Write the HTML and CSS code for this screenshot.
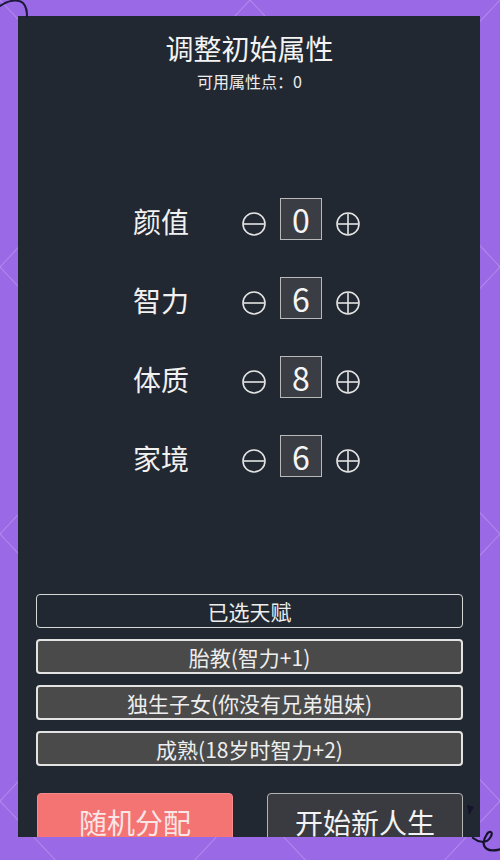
FILE: index.html
```html
<!DOCTYPE html>
<html lang="zh-CN">
<head>
<meta charset="utf-8">
<title>调整初始属性</title>
<link rel="stylesheet" href="styles.css">
</head>
<body>
<svg class="doodle doodle-tl" width="40" height="24" viewBox="0 0 40 24">
  <path d="M0 6 C8 0 18 -1 23 3 C27 7 27 12 27 17" fill="none" stroke="#1d1a3c" stroke-width="2" stroke-linecap="round"/>
</svg>
<svg class="doodle doodle-br" width="40" height="64" viewBox="0 0 40 64">
  <path d="M1 15 L8 17 L3 25 Z" fill="#15142a"/>
  <path d="M7 48 C12 52 20 54 24 48 C28 42 24 40 21 44 C17 50 16 56 21 59 C25 62 32 60 39 58" fill="none" stroke="#15142a" stroke-width="2.2" stroke-linecap="round"/>
</svg>
<main class="panel">
  <h1 class="title">调整初始属性</h1>
  <p class="points">可用属性点：0</p>

  <section class="attrs">
    <div class="attr-row">
      <span class="attr-label">颜值</span>
      <svg class="ctl" viewBox="0 0 24 24"><circle cx="12" cy="12" r="11" /><line x1="1.5" y1="12" x2="22.5" y2="12"/></svg>
      <span class="attr-value">0</span>
      <svg class="ctl" viewBox="0 0 24 24"><circle cx="12" cy="12" r="11" /><line x1="1.5" y1="12" x2="22.5" y2="12"/><line x1="12" y1="1.5" x2="12" y2="22.5"/></svg>
    </div>
    <div class="attr-row">
      <span class="attr-label">智力</span>
      <svg class="ctl" viewBox="0 0 24 24"><circle cx="12" cy="12" r="11" /><line x1="1.5" y1="12" x2="22.5" y2="12"/></svg>
      <span class="attr-value">6</span>
      <svg class="ctl" viewBox="0 0 24 24"><circle cx="12" cy="12" r="11" /><line x1="1.5" y1="12" x2="22.5" y2="12"/><line x1="12" y1="1.5" x2="12" y2="22.5"/></svg>
    </div>
    <div class="attr-row">
      <span class="attr-label">体质</span>
      <svg class="ctl" viewBox="0 0 24 24"><circle cx="12" cy="12" r="11" /><line x1="1.5" y1="12" x2="22.5" y2="12"/></svg>
      <span class="attr-value">8</span>
      <svg class="ctl" viewBox="0 0 24 24"><circle cx="12" cy="12" r="11" /><line x1="1.5" y1="12" x2="22.5" y2="12"/><line x1="12" y1="1.5" x2="12" y2="22.5"/></svg>
    </div>
    <div class="attr-row">
      <span class="attr-label">家境</span>
      <svg class="ctl" viewBox="0 0 24 24"><circle cx="12" cy="12" r="11" /><line x1="1.5" y1="12" x2="22.5" y2="12"/></svg>
      <span class="attr-value">6</span>
      <svg class="ctl" viewBox="0 0 24 24"><circle cx="12" cy="12" r="11" /><line x1="1.5" y1="12" x2="22.5" y2="12"/><line x1="12" y1="1.5" x2="12" y2="22.5"/></svg>
    </div>
  </section>

  <ul class="talents">
    <li class="talent-head">已选天赋</li>
    <li class="talent">胎教(智力+1)</li>
    <li class="talent">独生子女(你没有兄弟姐妹)</li>
    <li class="talent">成熟(18岁时智力+2)</li>
  </ul>

  <div class="actions">
    <button class="btn btn-random">随机分配</button>
    <button class="btn btn-start">开始新人生</button>
  </div>
</main>
</body>
</html>
```
FILE: styles.css
```css
* { box-sizing: border-box; }

html, body {
  margin: 0;
  padding: 0;
}

body {
  width: 500px;
  height: 860px;
  overflow: hidden;
  position: relative;
  font-family: "Noto Sans CJK SC", "Noto Sans", sans-serif;
  background-color: #9a69e6;
  background-image:
    linear-gradient(to top right, transparent calc(50% - 1px), rgba(255,255,255,0.22) 50%, transparent calc(50% + 1px)),
    linear-gradient(to bottom right, transparent calc(50% - 1px), rgba(255,255,255,0.22) 50%, transparent calc(50% + 1px));
  background-size: 250px 267px;
  padding-top: 16px;
  padding-left: 18px;
}

.doodle {
  position: absolute;
  z-index: 2;
}
.doodle-tl { left: 0; top: 0; }
.doodle-br { left: 466px; top: 790px; }

.panel {
  width: 462px;
  height: 821px;
  overflow: hidden;
  background: #222831;
  color: #f1f1f1;
  padding: 12px 17px 0 18px;
  display: flex;
  flex-direction: column;
}

.title {
  margin: 0;
  font-size: 28px;
  font-weight: 400;
  line-height: 41px;
  text-align: center;
  color: #f3f3f3;
}

.points {
  margin: 0;
  font-size: 16px;
  line-height: 24px;
  text-align: center;
  color: #ededed;
}

.attrs {
  margin-top: 105px;
  display: flex;
  flex-direction: column;
  gap: 37px;
}

.attr-row {
  height: 42px;
  display: flex;
  align-items: center;
  justify-content: center;
  padding-right: 6px;
}

.attr-label {
  width: 56px;
  font-size: 28px;
  line-height: 32px;
  margin-top: 3px;
  margin-right: 53px;
  color: #f1f1f1;
}

.ctl {
  width: 24px;
  height: 24px;
  margin-top: 10px;
  fill: none;
  stroke: #e4e4e4;
  stroke-width: 1.6;
}

.attr-value {
  width: 42px;
  height: 42px;
  margin: 0 14px;
  border: 1.5px solid #b9b9b9;
  background: #3a3d44;
  display: flex;
  align-items: center;
  justify-content: center;
  font-size: 32px;
  line-height: 1;
  color: #f5f5f5;
}

.talents {
  list-style: none;
  margin: 117px 0 0;
  padding: 0;
  display: flex;
  flex-direction: column;
  gap: 11px;
}

.talent-head,
.talent {
  display: flex;
  align-items: center;
  justify-content: center;
  font-size: 21px;
  color: #eeeeee;
  border-radius: 4px;
}

.talent-head {
  height: 34px;
  border: 1.5px solid #d8d8d8;
}

.talent {
  height: 35px;
  border: 2px solid #e3e3e3;
  background: #4a4a4a;
}

.actions {
  margin-top: 27px;
  display: grid;
  grid-template-columns: 196px 196px;
  justify-content: space-between;
  padding-left: 1px;
}

.btn {
  height: 60px;
  padding: 13px 0 0;
  display: flex;
  justify-content: center;
  align-items: flex-start;
  font-family: inherit;
  font-size: 28px;
  line-height: 30px;
  border-radius: 4px;
}

.btn-random {
  background: #f47373;
  color: #fbe6e6;
  border: 1px solid #f58a8a;
}

.btn-start {
  background: #393b41;
  color: #f3f3f3;
  border: 1px solid #b5b5b5;
}
```
